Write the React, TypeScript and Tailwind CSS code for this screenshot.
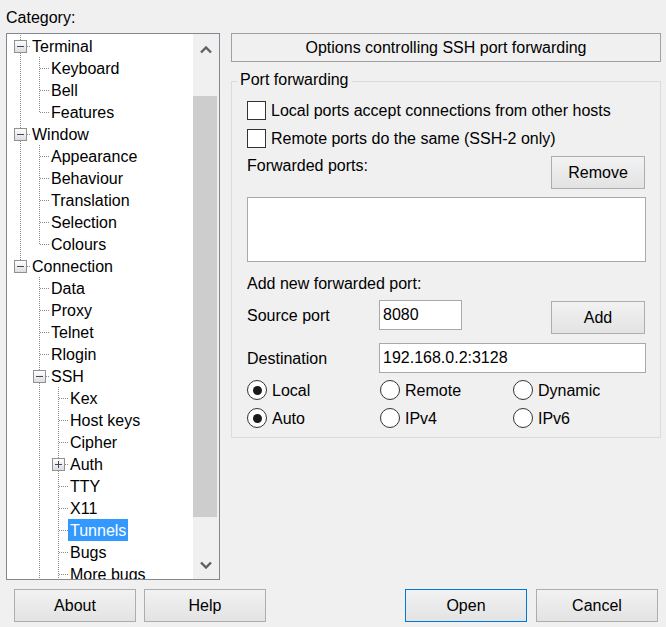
import clsx from "clsx";

type Seg = "none" | "full" | "tee" | "end";

type TreeRow = {
  label: string;
  lines: Seg[];
  toggle?: "minus" | "plus";
  selected?: boolean;
};

const rows: TreeRow[] = [
  { label: "Terminal", lines: ["tee"], toggle: "minus" },
  { label: "Keyboard", lines: ["full", "tee"] },
  { label: "Bell", lines: ["full", "tee"] },
  { label: "Features", lines: ["full", "end"] },
  { label: "Window", lines: ["tee"], toggle: "minus" },
  { label: "Appearance", lines: ["full", "tee"] },
  { label: "Behaviour", lines: ["full", "tee"] },
  { label: "Translation", lines: ["full", "tee"] },
  { label: "Selection", lines: ["full", "tee"] },
  { label: "Colours", lines: ["full", "end"] },
  { label: "Connection", lines: ["end"], toggle: "minus" },
  { label: "Data", lines: ["none", "tee"] },
  { label: "Proxy", lines: ["none", "tee"] },
  { label: "Telnet", lines: ["none", "tee"] },
  { label: "Rlogin", lines: ["none", "tee"] },
  { label: "SSH", lines: ["none", "tee"], toggle: "minus" },
  { label: "Kex", lines: ["none", "full", "tee"] },
  { label: "Host keys", lines: ["none", "full", "tee"] },
  { label: "Cipher", lines: ["none", "full", "tee"] },
  { label: "Auth", lines: ["none", "full", "tee"], toggle: "plus" },
  { label: "TTY", lines: ["none", "full", "tee"] },
  { label: "X11", lines: ["none", "full", "tee"] },
  { label: "Tunnels", lines: ["none", "full", "tee"], selected: true },
  { label: "Bugs", lines: ["none", "full", "tee"] },
  { label: "More bugs", lines: ["none", "full", "tee"] },
];

const dot = { stroke: "#8a8a8a", strokeWidth: 1, strokeDasharray: "1 1" };

function Cell({ seg, toggle }: { seg: Seg; toggle?: "minus" | "plus" }) {
  return (
    <svg width="19" height="22" className="shrink-0" shapeRendering="crispEdges">
      {seg !== "none" && <line x1="9.5" y1="0" x2="9.5" y2={seg === "end" ? 12 : 22} {...dot} />}
      {(seg === "tee" || seg === "end") && <line x1="10" y1="11.5" x2="19" y2="11.5" {...dot} />}
      {toggle && (
        <g>
          <defs>
            <linearGradient id="tg" x1="0" y1="0" x2="0" y2="1">
              <stop offset="0" stopColor="#ffffff" />
              <stop offset="1" stopColor="#dcdcdc" />
            </linearGradient>
          </defs>
          <rect x="3.5" y="5.5" width="12" height="12" fill="url(#tg)" stroke="#919191" />
          <line x1="6" y1="11.5" x2="13" y2="11.5" stroke="#3b4a68" />
          {toggle === "plus" && <line x1="9.5" y1="8" x2="9.5" y2="15" stroke="#3b4a68" />}
        </g>
      )}
    </svg>
  );
}

function Chevron({ down }: { down?: boolean }) {
  return (
    <svg width="12" height="8" viewBox="0 0 12 8">
      <polyline
        points={down ? "1,1.5 6,6.5 11,1.5" : "1,6.5 6,1.5 11,6.5"}
        fill="none"
        stroke="#606060"
        strokeWidth="2.4"
      />
    </svg>
  );
}

function Btn({ children, className, primary }: { children: string; className?: string; primary?: boolean }) {
  return (
    <button
      className={clsx(
        "border bg-linear-to-b from-[#f2f2f2] to-[#e3e3e3] text-[16px] leading-none text-black",
        primary ? "border-[#0078d7]" : "border-[#adadad]",
        className
      )}
    >
      {children}
    </button>
  );
}

function Check({ label }: { label: string }) {
  return (
    <div className="flex h-[22px] items-center gap-[5px]">
      <span className="h-[19px] w-[19px] border border-[#333333] bg-white" />
      <span className="pt-[2px] leading-[20px]">{label}</span>
    </div>
  );
}

function Radio({ label, checked }: { label: string; checked?: boolean }) {
  return (
    <div className="flex h-[22px] w-[135px] items-center gap-[5px]">
      <span className="flex h-[20px] w-[20px] items-center justify-center rounded-full border border-[#333333] bg-white">
        {checked && <span className="h-[9px] w-[9px] rounded-full bg-[#1a1a1a]" />}
      </span>
      <span className="pt-[2px] leading-[20px]">{label}</span>
    </div>
  );
}

export default function App() {
  return (
    <div className="h-[627px] w-[666px] overflow-hidden bg-[#f0f0f0] pt-[8px] font-['Liberation_Sans',Arial,sans-serif] text-[16px] text-black">
      <div className="flex gap-[11px] pl-[6px]">
        {/* category tree */}
        <div className="w-[214px]">
          <div className="leading-[20px]">Category:</div>
          <div className="mt-[5px] flex h-[547px] border border-[#828790] bg-white">
            <div className="flex-1 overflow-hidden pl-[4px] pt-[1px]">
              {rows.map((r) => (
                <div key={r.label} className="flex h-[22px] items-center">
                  {r.lines.map((s, i) => (
                    <Cell key={i} seg={s} toggle={i === r.lines.length - 1 ? r.toggle : undefined} />
                  ))}
                  <span
                    className={clsx(
                      "h-[22px] whitespace-nowrap px-[2px] pt-[2px] leading-[20px]",
                      r.selected && "bg-[#3399ff] text-white"
                    )}
                  >
                    {r.label}
                  </span>
                </div>
              ))}
            </div>
            <div className="flex w-[26px] flex-col bg-[#f0f0f0]">
              <div className="flex h-[31px] items-center justify-center">
                <Chevron />
              </div>
              <div className="h-[31px]" />
              <div className="mr-[2px] h-[421px] bg-[#cdcdcd]" />
              <div className="flex-1" />
              <div className="flex h-[28px] items-center justify-center">
                <Chevron down />
              </div>
            </div>
          </div>
        </div>

        {/* options panel */}
        <div className="w-[430px] pt-[25px]">
          <div className="flex h-[29px] items-center justify-center border border-[#a0a0a0]">
            Options controlling SSH port forwarding
          </div>
          <div className="relative mt-[19px] h-[357px] border border-[#dcdcdc] pl-[15px] pr-[14px] pt-[17px]">
            <span className="absolute -top-[11px] left-[5px] bg-[#f0f0f0] px-[3px] leading-[18px]">
              Port forwarding
            </span>
            <Check label="Local ports accept connections from other hosts" />
            <div className="mt-[6px]">
              <Check label="Remote ports do the same (SSH-2 only)" />
            </div>
            <div className="mt-[7px] flex items-start justify-between">
              <span className="pt-[1px] leading-[18px]">Forwarded ports:</span>
              <Btn className="mr-[1px] h-[33px] w-[94px]">Remove</Btn>
            </div>
            <div className="mt-[8px] h-[65px] border border-[#a9a9a9] bg-white" />
            <div className="mt-[11px] pt-[1px] leading-[20px]">Add new forwarded port:</div>
            <div className="mt-[6px] flex h-[34px] items-start">
              <span className="flex h-[30px] w-[132px] items-center pt-[2px]">Source port</span>
              <div className="h-[30px] w-[83px] border border-[#a9a9a9] bg-white pl-[3px] pt-[1px] leading-[25px]">
                8080
              </div>
              <Btn className="ml-auto mr-[1px] mt-[1px] h-[33px] w-[94px]">Add</Btn>
            </div>
            <div className="mt-[9px] flex h-[30px] items-center">
              <span className="w-[132px] pt-[2px]">Destination</span>
              <div className="h-[30px] flex-1 border border-[#a9a9a9] bg-white pl-[3px] pt-[1px] leading-[25px]">
                192.168.0.2:3128
              </div>
            </div>
            <div className="mt-[6px] flex">
              <Radio label="Local" checked />
              <Radio label="Remote" />
              <Radio label="Dynamic" />
            </div>
            <div className="mt-[6px] flex">
              <Radio label="Auto" checked />
              <Radio label="IPv4" />
              <Radio label="IPv6" />
            </div>
          </div>
        </div>
      </div>

      {/* dialog buttons */}
      <div className="mt-[9px] flex pl-[14px]">
        <Btn className="h-[33px] w-[122px]">About</Btn>
        <Btn className="ml-[8px] h-[33px] w-[122px]">Help</Btn>
        <Btn primary className="ml-[139px] h-[33px] w-[122px]">Open</Btn>
        <Btn className="ml-[9px] h-[33px] w-[122px]">Cancel</Btn>
      </div>
    </div>
  );
}
